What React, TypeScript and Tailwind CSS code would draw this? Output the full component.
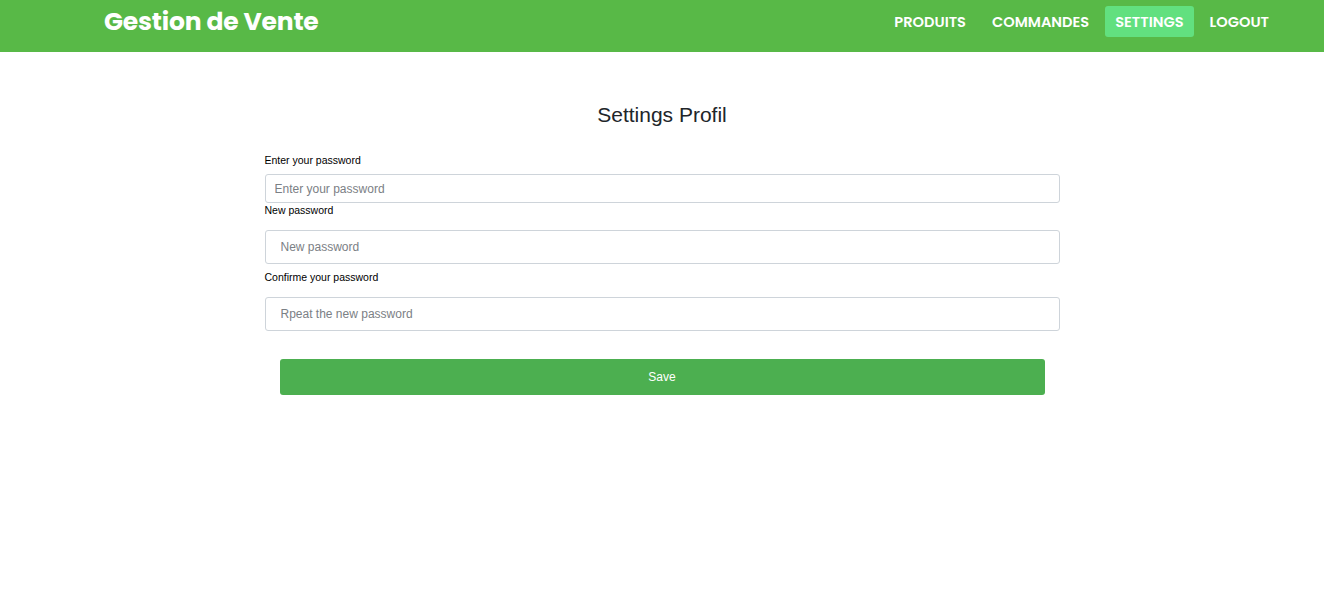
import React from 'react';

const navItems = ['PRODUITS', 'COMMANDES', 'SETTINGS', 'LOGOUT'];

function Header() {
  return (
    <header className="h-[52px] bg-[#58b947] flex items-start justify-between pl-[104px] pr-[45px] pt-[6px]">
      <h1
        className="text-[25px] leading-[31px] font-bold text-white tracking-[-0.2px]"
        style={{ fontFamily: 'Poppins, Inter, "Noto Sans", sans-serif' }}
      >
        Gestion de Vente
      </h1>
      <nav>
        <ul className="flex gap-[6px]">
          {navItems.map((item) => (
            <li key={item}>
              <a
                href="#"
                className={`block px-[10px] h-[31px] leading-[32px] rounded-[3px] text-[14.6px] font-semibold text-white ${
                  item === 'SETTINGS' ? 'bg-[#62e07f]' : ''
                }`}
                style={{ fontFamily: 'Poppins, Inter, "Noto Sans", sans-serif' }}
              >
                {item}
              </a>
            </li>
          ))}
        </ul>
      </nav>
    </header>
  );
}

function Field({
  label,
  placeholder,
  tall,
  labelGap,
}: {
  label: string;
  placeholder: string;
  tall?: boolean;
  labelGap: string;
}) {
  return (
    <div className="flex flex-col">
      <label className={`text-[10.5px] leading-[13px] text-black ${labelGap}`}>{label}</label>
      <input
        type="password"
        placeholder={placeholder}
        className={`w-full border border-[#ced4da] rounded-[3px] text-[12px] text-[#495057] placeholder:text-[#7b8085] outline-none ${
          tall ? 'h-[34px] px-[15px]' : 'h-[29px] px-[9px]'
        }`}
      />
    </div>
  );
}

export default function App() {
  return (
    <div className="min-h-[615px] bg-white" style={{ fontFamily: '"Liberation Sans", Arial, sans-serif' }}>
      <Header />
      <main className="w-[795px] mx-auto pt-[51px]">
        <h2 className="text-center text-[21px] leading-[24px] text-[#212529] mb-[27px]">Settings Profil</h2>
        <div className="flex flex-col">
          <Field label="Enter your password" placeholder="Enter your password" labelGap="mb-[7px]" />
          <div className="mt-[1px]">
            <Field label="New password" placeholder="New password" tall labelGap="mb-[13px]" />
          </div>
          <div className="mt-[7px]">
            <Field label="Confirme your password" placeholder="Rpeat the new password" tall labelGap="mb-[13px]" />
          </div>
        </div>
        <div className="px-[15px] mt-[28px]">
          <button className="w-full h-[36px] bg-[#4caf50] rounded-[3px] text-white text-[12px] font-medium">
            Save
          </button>
        </div>
      </main>
    </div>
  );
}
